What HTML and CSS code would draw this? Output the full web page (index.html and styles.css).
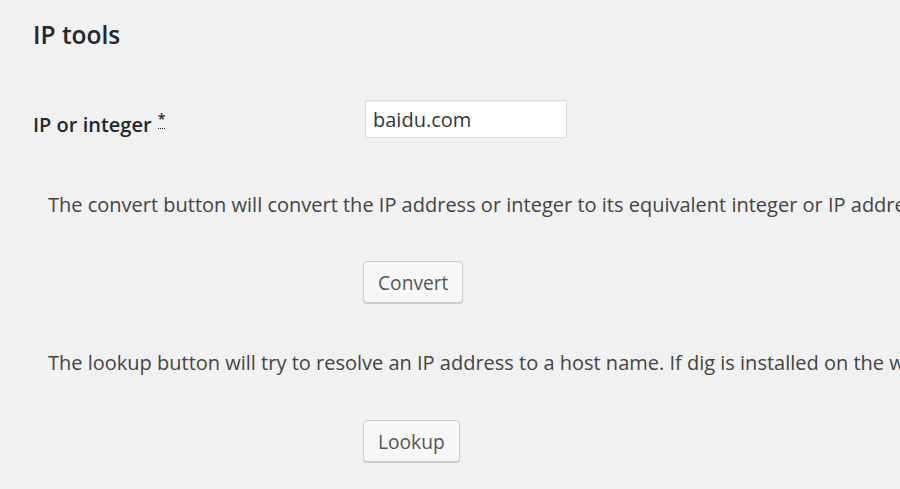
FILE: index.html
```html
<!DOCTYPE html>
<html>
<head>
<meta charset="utf-8">
<link rel="stylesheet" href="styles.css">
</head>
<body>
<div class="wrap">
  <h2 class="title">IP tools</h2>
  <div class="field-row">
    <label class="field-label" for="ip">IP or integer <abbr class="req" title="required">*</abbr></label>
    <div class="field-input"><input id="ip" class="text-input" type="text" value="baidu.com"></div>
  </div>
  <p class="desc desc-convert">The convert button will convert the IP address or integer to its equivalent integer or IP address.</p>
  <div class="btn-row btn-row-convert"><button class="button">Convert</button></div>
  <p class="desc desc-lookup">The lookup button will try to resolve an IP address to a host name. If dig is installed on the web server it will also show the reverse lookup.</p>
  <div class="btn-row btn-row-lookup"><button class="button">Lookup</button></div>
</div>
</body>
</html>
```

FILE: styles.css
```css
html, body {
  margin: 0;
  padding: 0;
  background: #f1f1f1;
  overflow: hidden;
  width: 900px;
  height: 489px;
}
body {
  font-family: "Open Sans", "Noto Sans", sans-serif;
  color: #444;
}
.wrap {
  padding-left: 33px;
  white-space: nowrap;
}
.title {
  margin: 0;
  padding-top: 18px;
  font-size: 24.5px;
  font-weight: 600;
  line-height: 34px;
  color: #23282d;
}
.field-row {
  display: grid;
  grid-template-columns: 332px auto;
  align-items: center;
  margin-top: 48px;
}
.field-label {
  font-size: 20px;
  font-weight: 600;
  color: #23282d;
  padding-top: 10px;
}
.req {
  text-decoration: none;
  border-bottom: 1px dotted #23282d;
  font-size: 14px;
  vertical-align: 8px;
  line-height: 1;
  margin-left: 1px;
}
.text-input {
  box-sizing: border-box;
  width: 202px;
  height: 38px;
  border: 1px solid #ddd;
  background: #fff;
  box-shadow: inset 0 1px 2px rgba(0,0,0,.07);
  font-family: inherit;
  font-size: 20px;
  color: #32373c;
  padding: 0 7px;
  margin: 0;
  outline: none;
}
.desc {
  margin: 0;
  padding-left: 15px;
  font-size: 20px;
  line-height: 28px;
}
.desc-convert {
  margin-top: 53px;
}
.desc-lookup {
  margin-top: 46px;
}
.btn-row {
  padding-left: 330px;
}
.btn-row-convert {
  margin-top: 42px;
}
.btn-row-lookup {
  margin-top: 43px;
}
.button {
  box-sizing: border-box;
  height: 42px;
  padding: 0 14px;
  border: 1px solid #ccc;
  border-radius: 4px;
  background: #f7f7f7;
  box-shadow: 0 1px 0 #ccc;
  color: #555;
  font-family: inherit;
  font-size: 19.2px;
  cursor: pointer;
}
```
